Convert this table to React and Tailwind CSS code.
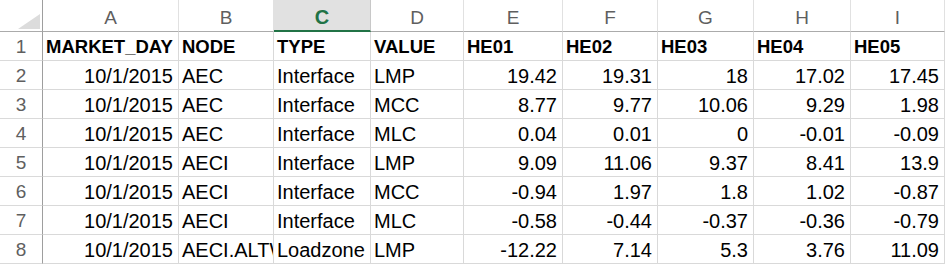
import React from "react";

const cols = ["A", "B", "C", "D", "E", "F", "G", "H", "I"];
const header = ["MARKET_DAY", "NODE", "TYPE", "VALUE", "HE01", "HE02", "HE03", "HE04", "HE05"];
const data = [
  ["10/1/2015", "AEC", "Interface", "LMP", "19.42", "19.31", "18", "17.02", "17.45"],
  ["10/1/2015", "AEC", "Interface", "MCC", "8.77", "9.77", "10.06", "9.29", "1.98"],
  ["10/1/2015", "AEC", "Interface", "MLC", "0.04", "0.01", "0", "-0.01", "-0.09"],
  ["10/1/2015", "AECI", "Interface", "LMP", "9.09", "11.06", "9.37", "8.41", "13.9"],
  ["10/1/2015", "AECI", "Interface", "MCC", "-0.94", "1.97", "1.8", "1.02", "-0.87"],
  ["10/1/2015", "AECI", "Interface", "MLC", "-0.58", "-0.44", "-0.37", "-0.36", "-0.79"],
  ["10/1/2015", "AECI.ALTW", "Loadzone", "LMP", "-12.22", "7.14", "5.3", "3.76", "11.09"],
];
const numericCols = [0, 4, 5, 6, 7, 8];

export default function App() {
  return (
    <div
      className="w-[945px] h-[265px] overflow-hidden bg-white text-black"
      style={{ fontFamily: '"Liberation Sans", Arial, sans-serif' }}
    >
      <div className="grid grid-cols-[43px_136px_95px_97px_93px_99px_95px_96px_97px_1fr]">
        {/* column header row */}
        <div className="h-[32px] border-r border-r-[#9e9e9e] border-b border-b-[#ababab] relative">
          <svg className="absolute left-[18px] top-[14px]" width="22" height="15" viewBox="0 0 22 15">
            <polygon points="0,15 22,15 22,0" fill="#dcdcdc" />
          </svg>
        </div>
        {cols.map((c) =>
          c === "C" ? (
            <div
              key={c}
              className="h-[32px] mt-0 border-r border-r-[#c8c8c8] border-b-2 border-b-[#217346] bg-[#e1e1e1] flex items-end justify-center pb-[2px] text-[20px] leading-[22px] font-bold text-[#217346]"
            >
              {c}
            </div>
          ) : (
            <div
              key={c}
              className="h-[32px] border-r border-r-[#e1e1e1] border-b border-b-[#ababab] flex items-end justify-center pb-[2px] text-[19px] leading-[22px] text-[#5f5f5f]"
            >
              {c}
            </div>
          )
        )}
        {/* row 1 */}
        <div className="h-[29px] border-r border-r-[#9e9e9e] border-b border-b-[#dadada] flex items-end justify-center pb-[3px] text-[19px] leading-[20px] text-[#5f5f5f]">
          1
        </div>
        {header.map((h) => (
          <div
            key={h}
            className="h-[29px] border-r border-r-[#d9d9d9] border-b border-b-[#d9d9d9] flex items-end pl-[3px] pb-[3px] text-[18.5px] leading-[20px] font-bold whitespace-nowrap overflow-hidden"
          >
            {h}
          </div>
        ))}
        {data.map((row, r) => (
          <React.Fragment key={r}>
            <div className="h-[29px] border-r border-r-[#9e9e9e] border-b border-b-[#dadada] flex items-end justify-center pb-[3px] text-[19px] leading-[20px] text-[#5f5f5f]">
              {r + 2}
            </div>
            {row.map((v, i) => (
              <div
                key={i}
                className={
                  numericCols.includes(i)
                    ? "h-[29px] border-r border-r-[#d9d9d9] border-b border-b-[#d9d9d9] flex items-end justify-end pr-[5px] pb-[3px] text-[20px] leading-[20px] whitespace-nowrap overflow-hidden"
                    : "h-[29px] border-r border-r-[#d9d9d9] border-b border-b-[#d9d9d9] flex items-end pl-[3px] pb-[3px] text-[20px] leading-[20px] whitespace-nowrap overflow-hidden"
                }
              >
                {v}
              </div>
            ))}
          </React.Fragment>
        ))}
      </div>
    </div>
  );
}
